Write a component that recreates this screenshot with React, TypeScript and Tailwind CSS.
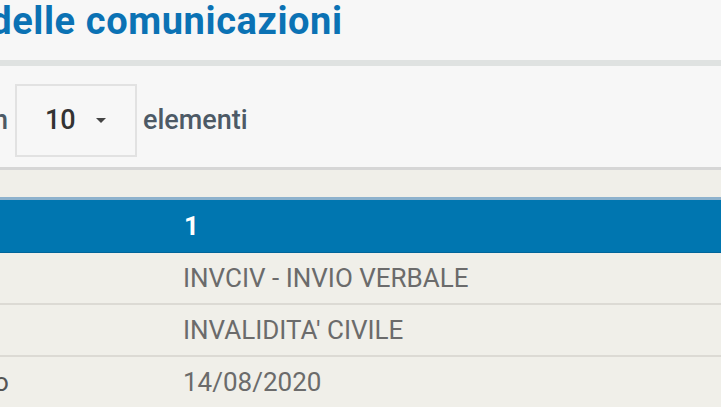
import React from "react";

const rows = [
  { label: "Codice", value: "INVCIV - INVIO VERBALE" },
  { label: "Area", value: "INVALIDITA' CIVILE" },
  { label: "Data invio", value: "14/08/2020" },
];

export default function App() {
  return (
    <div className="w-[721px] h-[407px] overflow-hidden bg-[#f0efe9] font-['Roboto',sans-serif]">
      <div className="bg-[#f7f7f7]">
        <div className="h-[60px] flex items-start overflow-hidden">
          <h1 className="ml-[-138px] mt-[1px] text-[38px] leading-[40px] font-bold tracking-[0.6px] text-[#0b72b4] whitespace-nowrap">
            Elenco delle comunicazioni
          </h1>
        </div>
        <div className="h-[6px] bg-[#dfe2e1]" />
        <div className="h-[101px] pt-[8px] flex items-center overflow-hidden">
          <span className="ml-[-192px] w-[200px] shrink-0 text-right text-[27px] font-medium text-[#4d5a66] whitespace-nowrap">
            Visualizza in
          </span>
          <div className="ml-[7px] w-[122px] h-[73px] shrink-0 border-2 border-[#e2e2e2] flex items-center pl-[28px] gap-[20px]">
            <span className="text-[27px] font-medium text-[#333]">10</span>
            <span className="w-0 h-0 border-l-[5px] border-r-[5px] border-t-[5px] border-l-transparent border-r-transparent border-t-[#444]" />
          </div>
          <span className="ml-[6px] text-[27px] font-medium text-[#4d5a66]">elementi</span>
        </div>
        <div className="h-[3px] bg-[#d6d6d6]" />
      </div>
      <div className="h-[27px]" />
      <div className="h-[3px] bg-[#8eb2cd]" />
      <div className="h-[53px] bg-[#0076b0] border-b border-[#00659a] flex items-center">
        <div className="w-[170px] shrink-0" />
        <div className="pl-[14px] text-[26px] font-bold text-white">1</div>
      </div>
      {rows.map((r, i) => (
        <div key={i}>
          <div className="h-[50px] flex items-center text-[26px] text-[#6b6b6b]">
            <div className="w-[170px] shrink-0 overflow-hidden">
              <span className="block ml-[-106px] whitespace-nowrap text-[#555]">{r.label}</span>
            </div>
            <div className="pl-[13px] whitespace-nowrap">{r.value}</div>
          </div>
          <div className="h-[2px] bg-[#dcdad4]" />
        </div>
      ))}
    </div>
  );
}
